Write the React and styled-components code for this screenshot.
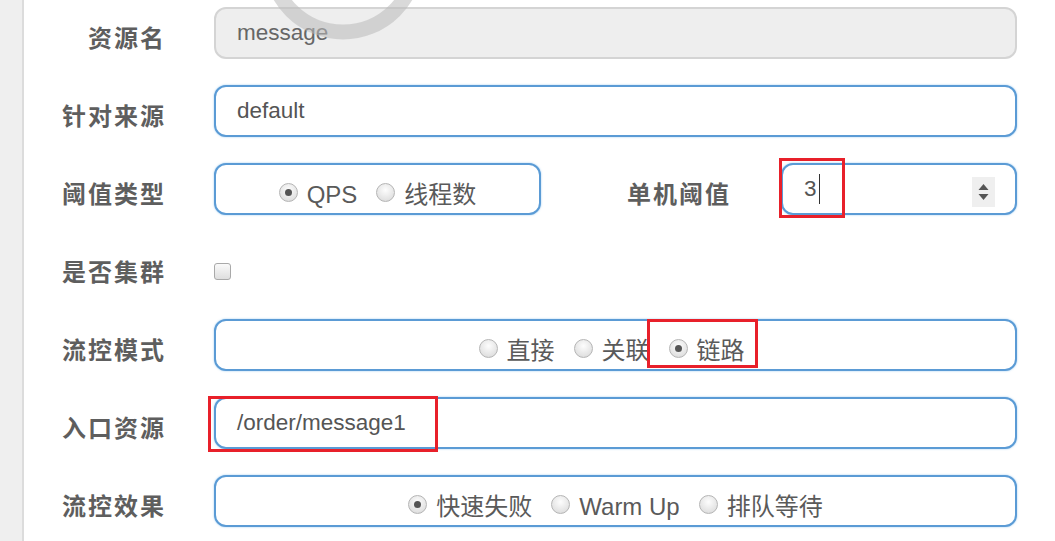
import React from "react";
import styled, { createGlobalStyle } from "styled-components";

const GlobalStyle = createGlobalStyle`
    html, body {
        margin: 0;
        padding: 0;
        background: #fff;
    }
    body {
        font-family: "Liberation Sans", "Noto Sans CJK SC", sans-serif;
        color: #555;
    }
`;

const Page = styled.div`
    position: relative;
    display: flex;
    width: 1055px;
    height: 541px;
    overflow: hidden;
`;

const SideStrip = styled.div`
    width: 22px;
    flex: none;
    background: #efefef;
    border-right: 2px solid #dcdcdc;
`;

const Form = styled.div`
    flex: 1;
    display: flex;
    flex-direction: column;
    gap: 26px;
    padding: 7px 38px 0 0;
`;

const Row = styled.div`
    display: grid;
    grid-template-columns: 140px 1fr;
    column-gap: 50px;
    align-items: center;
    height: 52px;
`;

const Label = styled.div`
    text-align: right;
    font-family: "Noto Sans CJK SC", sans-serif;
    font-weight: 700;
    font-size: 24px;
    letter-spacing: 2px;
    margin-right: -2px;
    padding-top: 6px;
    color: #5e5e5e;
    width: ${p => p.$width || "auto"};
    flex: none;
`;

const Field = styled.div`
    position: relative;
    box-sizing: border-box;
    height: 52px;
    border-radius: 12px;
    border: 2px solid ${p => p.$disabled ? "#d4d4d4" : "#5b9bd5"};
    background: ${p => p.$disabled ? "#eeeeee" : "#fff"};
    box-shadow: ${p => p.$disabled ? "none" : "0 0 2px rgba(102,175,233,.7)"};
    display: flex;
    align-items: center;
    justify-content: ${p => p.$center ? "center" : "flex-start"};
    padding: 0 ${p => p.$center ? "0" : "21px"};
    font-size: 22.5px;
    color: ${p => p.$disabled ? "#666" : "#555"};
    width: ${p => p.$width || "auto"};
    flex: ${p => p.$width ? "none" : "1"};
`;

const Inline = styled.div`
    display: flex;
    align-items: center;
`;

const RadioGroup = styled.div`
    display: flex;
    align-items: center;
    gap: 19px;
    margin-top: 12px;
    margin-left: ${p => p.$nudge || 0}px;
`;

const RadioItem = styled.label`
    position: relative;
    display: flex;
    align-items: center;
    gap: 9px;
    font-size: 24px;
    line-height: 28px;
    color: #5a5a5a;
`;

const RadioDot = styled.span`
    width: 17px;
    height: 17px;
    margin-top: -5px;
    border-radius: 50%;
    border: 1px solid #b5b5b5;
    background: radial-gradient(circle at 50% 35%, #fdfdfd 0%, #e2e2e2 70%, #d0d0d0 100%);
    display: flex;
    align-items: center;
    justify-content: center;
    &::after {
        content: "";
        width: 7px;
        height: 7px;
        border-radius: 50%;
        background: #555;
        display: ${p => p.$checked ? "block" : "none"};
    }
`;

const Checkbox = styled.span`
    width: 17px;
    height: 17px;
    margin-top: 8px;
    box-sizing: border-box;
    border: 1px solid #a9a9a9;
    border-radius: 3px;
    background: linear-gradient(#fafafa, #dedede);
`;

const Caret = styled.span`
    display: inline-block;
    width: 1px;
    height: 30px;
    background: #333;
    margin-left: 2px;
`;

const Spinner = styled.div`
    position: absolute;
    right: 20px;
    top: 12px;
    width: 23px;
    height: 30px;
    background: #efefef;
    display: flex;
    align-items: center;
    justify-content: center;
`;

const Highlight = styled.div`
    position: absolute;
    box-sizing: border-box;
    border: 3px solid #e8202a;
    top: ${p => p.$top}px;
    left: ${p => p.$left}px;
    width: ${p => p.$w}px;
    height: ${p => p.$h}px;
    pointer-events: none;
`;

const Watermark = styled.svg`
    position: absolute;
    left: 253px;
    top: -131px;
    pointer-events: none;
`;

const Radio = ({ checked, children, mark }) => (
    <RadioItem>
        <RadioDot $checked={checked} />
        {children}
        {mark}
    </RadioItem>
);

const App = () => {
    return (
        <>
            <GlobalStyle />
            <Page>
                <SideStrip />
                <Form>
                    <Row>
                        <Label>资源名</Label>
                        <Field $disabled>message</Field>
                    </Row>
                    <Row>
                        <Label>针对来源</Label>
                        <Field>default</Field>
                    </Row>
                    <Row>
                        <Label>阈值类型</Label>
                        <Inline>
                            <Field $center $width="327px">
                                <RadioGroup>
                                    <Radio checked>QPS</Radio>
                                    <Radio>线程数</Radio>
                                </RadioGroup>
                            </Field>
                            <Label $width="190px">单机阈值</Label>
                            <Field style={{ marginLeft: 52 }}>
                                3<Caret />
                                <Spinner>
                                    <svg width="11" height="18" viewBox="0 0 11 18">
                                        <path d="M5.5 1 L10.5 7 L0.5 7 Z" fill="#555" />
                                        <path d="M0.5 11 L10.5 11 L5.5 17 Z" fill="#555" />
                                    </svg>
                                </Spinner>
                                <Highlight $top={-7} $left={-4} $w={66} $h={60} />
                            </Field>
                        </Inline>
                    </Row>
                    <Row>
                        <Label>是否集群</Label>
                        <Inline>
                            <Checkbox />
                        </Inline>
                    </Row>
                    <Row>
                        <Label>流控模式</Label>
                        <Field $center>
                            <RadioGroup $nudge={-8}>
                                <Radio>直接</Radio>
                                <Radio>关联</Radio>
                                <Radio
                                    checked
                                    mark={<Highlight $top={-18} $left={-22} $w={111} $h={49} />}
                                >
                                    链路
                                </Radio>
                            </RadioGroup>
                        </Field>
                    </Row>
                    <Row>
                        <Label>入口资源</Label>
                        <Field>
                            /order/message1
                            <Highlight $top={-3} $left={-8} $w={230} $h={56} />
                        </Field>
                    </Row>
                    <Row>
                        <Label>流控效果</Label>
                        <Field $center>
                            <RadioGroup>
                                <Radio checked>快速失败</Radio>
                                <Radio>Warm Up</Radio>
                                <Radio>排队等待</Radio>
                            </RadioGroup>
                        </Field>
                    </Row>
                </Form>
                <Watermark width="180" height="180" viewBox="0 0 180 180">
                    <circle cx="90" cy="90" r="73" fill="none" stroke="rgba(185,185,185,0.55)" strokeWidth="15" />
                </Watermark>
            </Page>
        </>
    );
};

export default App;
